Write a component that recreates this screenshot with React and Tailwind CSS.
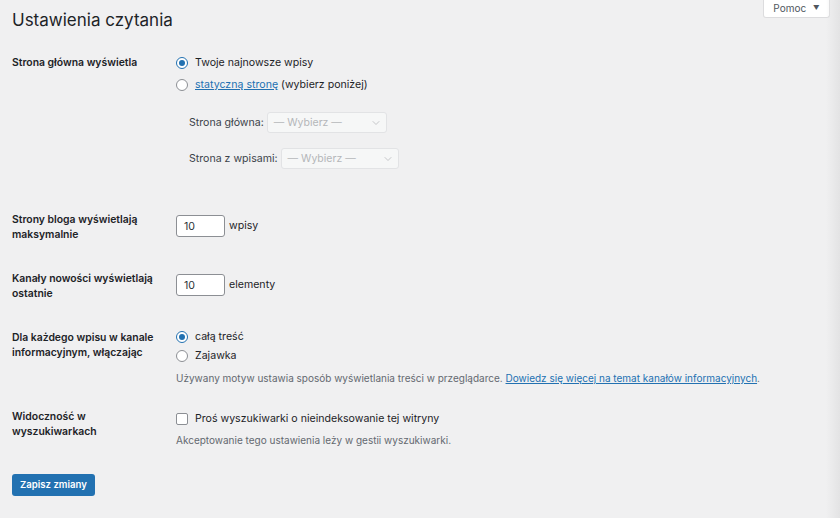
import { ChevronDown } from 'lucide-react';

const font = { fontFamily: 'Inter, "Liberation Sans", Arial, sans-serif' };

const Radio = ({ checked }) => (
  <span
    className={`inline-flex h-[12px] w-[12px] shrink-0 items-center justify-center rounded-full border bg-white ${
      checked ? 'border-[#2271b1]' : 'border-[#8c8f94]'
    }`}
  >
    {checked && <span className="h-[6px] w-[6px] rounded-full bg-[#2271b1]" />}
  </span>
);

const DisabledSelect = ({ width }) => (
  <div
    className={`flex h-[21px] ${width} items-center justify-between rounded-[3px] border border-[#e2e3e5] bg-[#f6f7f7] pl-[6px] pr-[4px] text-[10.5px] text-[#b4b6b9]`}
  >
    <span>— Wybierz —</span>
    <ChevronDown size={12} strokeWidth={1.5} className="text-[#b4b6b9]" />
  </div>
);

const NumberInput = () => (
  <div className="flex h-[22px] w-[49px] items-center rounded-[3px] border border-[#8c8f94] bg-white pl-[7px] text-[10.6px] text-[#2c3338]">
    10
  </div>
);

export default function App() {
  return (
    <div className="relative min-h-[518px] overflow-hidden bg-[#f0f0f1] text-[#1d2327]" style={font}>
      <div className="absolute right-[10px] top-0 flex h-[18px] w-[67px] items-center justify-center gap-[7px] rounded-b-[3px] border border-t-0 border-[#dcdcde] bg-white text-[10px] text-[#50575e]">
        <span>Pomoc</span>
        <span className="text-[6.5px]">▼</span>
      </div>
      <div className="pointer-events-none absolute right-0 top-0 h-full w-[14px] bg-gradient-to-r from-transparent to-[#e3e3e4]" />

      <div className="px-[12px] pt-[9px]">
        <h1 className="text-[17px] leading-[22px] font-normal text-[#1d2327]">Ustawienia czytania</h1>

        <div className="mt-[24px] text-[10.6px] leading-[15px]">
          {/* Strona główna */}
          <div className="flex">
            <div className="w-[164px] text-[10.4px] font-semibold">Strona główna wyświetla</div>
            <div className="flex flex-col">
              <label className="flex items-center gap-[7px]">
                <Radio checked />
                <span>Twoje najnowsze wpisy</span>
              </label>
              <label className="mt-[7px] flex items-center gap-[7px]">
                <Radio />
                <span>
                  <span className="text-[#2271b1] underline">statyczną stronę</span> (wybierz poniżej)
                </span>
              </label>
              <div className="mt-[20px] flex flex-col gap-[15px] pl-[13px] text-[#3c434a]">
                <div className="flex items-center gap-[3px]">
                  <span>Strona główna:</span>
                  <DisabledSelect width="w-[120px]" />
                </div>
                <div className="flex items-center gap-[3px]">
                  <span>Strona z wpisami:</span>
                  <DisabledSelect width="w-[118px]" />
                </div>
              </div>
            </div>
          </div>

          {/* Strony bloga */}
          <div className="mt-[43px] flex h-[59px]">
            <div className="w-[164px] text-[10.4px] font-semibold">
              Strony bloga wyświetlają
              <br />
              maksymalnie
            </div>
            <div className="mt-[3px] flex items-start gap-[4px]">
              <NumberInput />
              <span className="leading-[22px]">wpisy</span>
            </div>
          </div>

          {/* Kanały */}
          <div className="flex h-[59px]">
            <div className="w-[164px] text-[10.4px] font-semibold">
              Kanały nowości wyświetlają
              <br />
              ostatnie
            </div>
            <div className="mt-[3px] flex items-start gap-[4px]">
              <NumberInput />
              <span className="leading-[22px]">elementy</span>
            </div>
          </div>

          {/* Dla każdego wpisu */}
          <div className="flex h-[79px]">
            <div className="w-[164px] text-[10.4px] font-semibold">
              Dla każdego wpisu w kanale
              <br />
              informacyjnym, włączając
            </div>
            <div className="-mt-[1px] flex flex-col">
              <label className="flex items-center gap-[7px]">
                <Radio checked />
                <span>całą treść</span>
              </label>
              <label className="mt-[4px] flex items-center gap-[7px]">
                <Radio />
                <span>Zajawka</span>
              </label>
              <p className="mt-[8px] text-[10px] text-[#646970]">
                Używany motyw ustawia sposób wyświetlania treści w przeglądarce.{' '}
                <span className="text-[#2271b1] underline">Dowiedz się więcej na temat kanałów informacyjnych</span>.
              </p>
            </div>
          </div>

          {/* Widoczność */}
          <div className="flex">
            <div className="w-[164px] text-[10.4px] font-semibold">
              Widoczność w
              <br />
              wyszukiwarkach
            </div>
            <div className="mt-[2px] flex flex-col">
              <label className="flex items-center gap-[7px]">
                <span className="h-[12px] w-[12px] rounded-[2px] border border-[#8c8f94] bg-white" />
                <span>Proś wyszukiwarki o nieindeksowanie tej witryny</span>
              </label>
              <p className="mt-[7px] text-[10px] text-[#646970]">Akceptowanie tego ustawienia leży w gestii wyszukiwarki.</p>
            </div>
          </div>
        </div>

        <button className="mt-[26px] flex h-[22px] items-center rounded-[3px] bg-[#2271b1] px-[8px] text-[9.6px] font-semibold text-white">
          Zapisz zmiany
        </button>
      </div>
    </div>
  );
}
